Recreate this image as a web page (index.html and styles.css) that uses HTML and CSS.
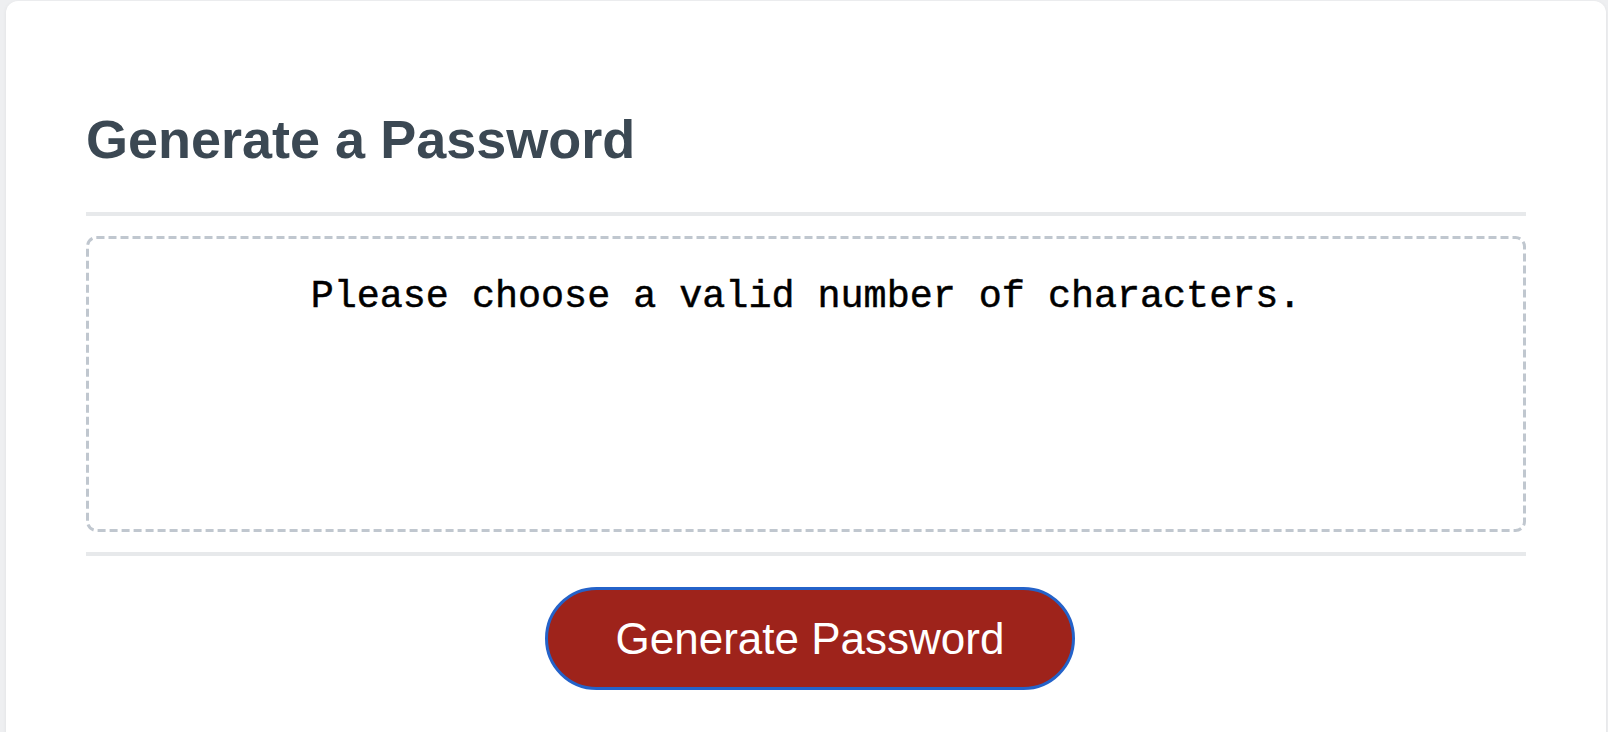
FILE: index.html
```html
<!DOCTYPE html>
<html lang="en">
<head>
<meta charset="utf-8">
<title>Password Generator</title>
<link rel="stylesheet" href="styles.css">
</head>
<body>
  <div class="card">
    <div class="card-header">
      <h2 class="title">Generate a Password</h2>
    </div>
    <div class="card-body">
      <div class="password-box">
        <svg class="dash-frame" width="1440" height="296" viewBox="0 0 1440 296" aria-hidden="true">
          <rect x="1.5" y="1.5" width="1437" height="293" rx="9" ry="9" fill="none" stroke="#c0c7cf" stroke-width="3" stroke-dasharray="8 4"/>
        </svg>
        <span class="password-text">Please choose a valid number of characters.</span>
      </div>
    </div>
    <div class="card-footer">
      <button class="btn" type="button">Generate Password</button>
    </div>
  </div>
</body>
</html>
```

FILE: styles.css
```css
html {
  overflow: hidden;
}
body {
  margin: 0;
  background: #eeeff1;
  font-family: "Liberation Sans", Arial, sans-serif;
}
.card {
  margin: 1px 2px 0 6px;
  background: #ffffff;
  border-radius: 12px;
  box-shadow: 0 1px 4px rgba(0, 0, 0, 0.06);
  padding: 107px 80px 60px;
  color: #3b4853;
}
.card-header::after {
  content: "";
  display: block;
  height: 4px;
  background: #e7e9eb;
  margin-top: 42px;
}
.title {
  margin: 0;
  font-size: 54px;
  line-height: 62px;
  font-weight: 700;
  color: #3b4853;
}
.card-body {
  padding: 20px 0;
}
.password-box {
  position: relative;
  box-sizing: border-box;
  height: 296px;
  padding: 40px 33px 0;
  text-align: center;
  font-family: "Liberation Mono", "Courier New", monospace;
  font-size: 38.4px;
  line-height: 43.5px;
  color: #000000;
  -webkit-text-stroke: 0.5px #000000;
}
.dash-frame {
  position: absolute;
  left: 0;
  top: 0;
  width: 100%;
  height: 100%;
}
.password-text {
  position: relative;
}
.card-footer {
  text-align: center;
}
.card-footer::before {
  content: "";
  display: block;
  height: 4px;
  background: #e7e9eb;
  margin-bottom: 31px;
}
.btn {
  display: inline-block;
  box-sizing: border-box;
  height: 103px;
  margin-left: 8px;
  border: 3.5px solid #2462c9;
  background: #9e231b;
  color: #ffffff;
  border-radius: 52px;
  font-family: "Liberation Sans", Arial, sans-serif;
  font-size: 44px;
  line-height: 44px;
  padding: 26px 68px 26px;
  cursor: pointer;
}
```
